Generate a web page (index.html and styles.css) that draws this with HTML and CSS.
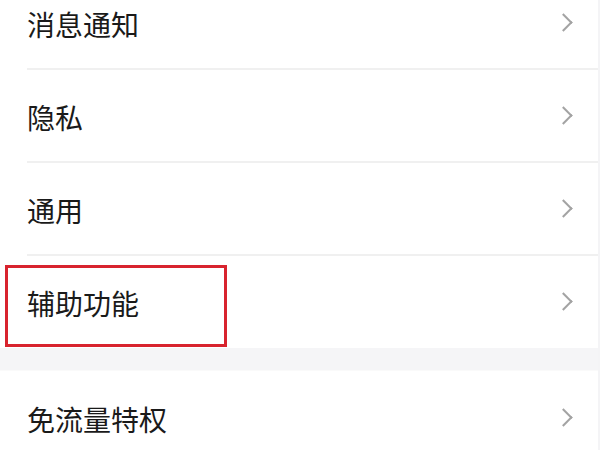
FILE: index.html
```html
<!DOCTYPE html>
<html lang="zh-CN">
<head>
    <meta charset="UTF-8">
    <meta name="viewport" content="width=device-width, initial-scale=1.0">
    <title>设置</title>
    <link rel="stylesheet" href="styles.css">
</head>
<body>
    <div class="settings">
        <div class="group">
            <div class="item">
                <span class="label">消息通知</span>
                <span class="arrow"></span>
            </div>
            <div class="item">
                <span class="label">隐私</span>
                <span class="arrow"></span>
            </div>
            <div class="item">
                <span class="label">通用</span>
                <span class="arrow"></span>
            </div>
            <div class="item highlight">
                <span class="label">辅助功能</span>
                <span class="arrow"></span>
                <div class="mark"></div> <!-- red annotation box -->
            </div>
        </div>

        <div class="gap"></div>

        <div class="group">
            <div class="item">
                <span class="label">免流量特权</span>
                <span class="arrow"></span>
            </div>
        </div>
    </div>
</body>
</html>
```

FILE: styles.css
```css
body {
    margin: 0;
    background: #fff;
    font-family: "Noto Sans CJK SC", "Noto Sans", sans-serif;
    color: #1a1a1a;
    overflow: hidden;
}

.settings {
    margin-top: -24px; /* list is scrolled a bit */
    border-right: 2px solid #f4f4f6;
}

.item {
    height: 93px;
    display: flex;
    align-items: center;
    justify-content: space-between;
    padding: 0 27px 0 27px;
    position: relative;
}

/* divider starts under the text, runs to the edge */
.item + .item::before {
    content: "";
    position: absolute;
    top: -1px;
    left: 27px;
    right: 0;
    height: 2px;
    background: #f0f0f0;
}

.label {
    font-size: 28px;
    line-height: 1;
    padding-top: 2px;
}

.arrow {
    width: 11px;
    height: 11px;
    border-top: 2px solid #a3a3a3;
    border-right: 2px solid #a3a3a3;
    transform: rotate(45deg);
    margin-right: 1px;
}

.gap {
    height: 22px;
    background: #f5f5f7;
    border-bottom: 1px solid #fafafa;
}

.mark {
    position: absolute;
    top: 10px;
    left: 5px;
    width: 216px;
    height: 76px;
    border: 3px solid #d8232e;
}
```
